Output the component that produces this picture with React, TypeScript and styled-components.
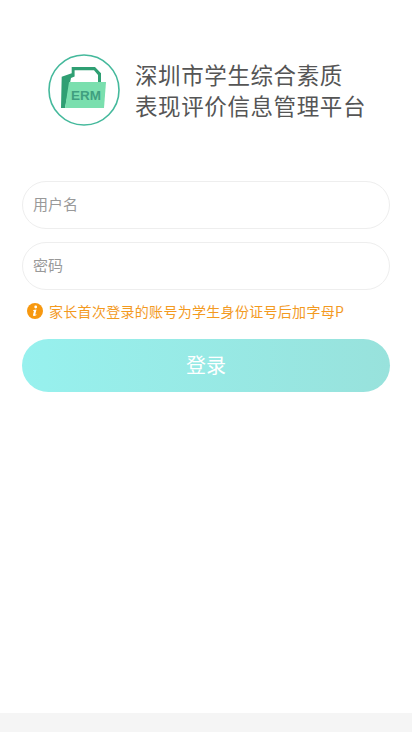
import { useState } from 'react';
import { styled, createGlobalStyle } from 'styled-components';

const FONT = `"Noto Sans CJK SC", "Liberation Sans", sans-serif`;

const GlobalStyle = createGlobalStyle`
  html, body {
    margin: 0;
    padding: 0;
    background: #fff;
  }
  * {
    box-sizing: border-box;
  }
`;

const LogoMark = () => (
  <svg width="74" height="74" viewBox="0 0 74 74">
    <circle cx="37" cy="37" r="35" fill="#fff" stroke="#45b99c" strokeWidth="1.600" />
    <path
      d="M14 55 L14.700 23.700 L24.700 20.300 L24.700 14 L48 14 L54 20.300 L54 29 L51 29 L51 22 L47 17.200 L27.600 17.200 L27.600 23.500 L24 25 L18 55 Z"
      fill="#2f9f73"
    />
    <path d="M22 29 L59 29 L57 55 L18 55 Z" fill="#7adfae" />
    <text x="39" y="47" textAnchor="middle" fontFamily='"Liberation Sans", sans-serif' fontWeight="700" fontSize="13.500" fill="#3f9f80">
      ERM
    </text>
  </svg>
);

const InfoIcon = () => (
  <svg width="16" height="16" viewBox="0 0 16 16">
    <circle cx="8" cy="8" r="8" fill="#f7980f" />
    <circle cx="8.700" cy="4" r="1.400" fill="#fff" />
    <path d="M6.200 7 L9.500 6.600 L8.300 11.300 Q8.200 12 9.400 11.300 L9.500 12 Q7.800 13.300 6.600 13 Q5.800 12.700 6.100 11.600 L7 8 L6.100 7.800 Z" fill="#fff" />
  </svg>
);

const App = () => {
  const [username, setUsername] = useState('');
  const [password, setPassword] = useState('');

  return (
    <Page>
      <GlobalStyle />
      <Main>
        <Brand>
          <LogoMark />
          <BrandName>
            <span>深圳市学生综合素质</span>
            <span>表现评价信息管理平台</span>
          </BrandName>
        </Brand>
        <LoginForm>
          <Field
            type="text"
            placeholder="用户名"
            value={username}
            onChange={(e: React.ChangeEvent<HTMLInputElement>) => setUsername(e.target.value)}
          />
          <Field
            type="password"
            placeholder="密码"
            value={password}
            onChange={(e: React.ChangeEvent<HTMLInputElement>) => setPassword(e.target.value)}
          />
          <Notice>
            <InfoIcon />
            <span>家长首次登录的账号为学生身份证号后加字母P</span>
          </Notice>
          <SubmitButton type="button">登录</SubmitButton>
        </LoginForm>
      </Main>
      <Footer />
    </Page>
  );
};

const Page = styled.div`
  display: flex;
  flex-direction: column;
  min-height: 100vh;
  font-family: ${FONT};
`;

const Main = styled.main`
  flex: 1;
  padding: 53px 22px 0;
`;

const Brand = styled.div`
  display: flex;
  align-items: center;
  gap: 14px;
  padding-left: 25px;
`;

const BrandName = styled.h1`
  display: flex;
  flex-direction: column;
  margin: 0;
  font-size: 22.500px;
  line-height: 31px;
  font-weight: 400;
  letter-spacing: 0.600px;
  color: #555;
  white-space: nowrap;
`;

const LoginForm = styled.form`
  display: flex;
  flex-direction: column;
  margin-top: 54px;
`;

const Field = styled.input`
  width: 100%;
  height: 48px;
  margin-bottom: 13px;
  padding: 0 10px 4px;
  background: #fff;
  border: 1px solid #eeeeee;
  border-radius: 24px;
  font-family: ${FONT};
  font-size: 15px;
  color: #333;
  outline: none;
  &::placeholder {
    color: #999;
    opacity: 1;
  }
`;

const Notice = styled.div`
  display: flex;
  align-items: center;
  gap: 6px;
  height: 18px;
  margin-top: -1px;
  padding-left: 5px;
  font-size: 14px;
  letter-spacing: 0.300px;
  line-height: 16px;
  color: #f39a1f;
  white-space: nowrap;
`;

const SubmitButton = styled.button`
  width: 100%;
  height: 53px;
  margin-top: 19px;
  padding: 0 0 2px;
  border: 0;
  border-radius: 27px;
  background: linear-gradient(90deg, #97f1ee, #98e2dc);
  font-family: ${FONT};
  font-size: 20px;
  color: #fff;
`;

const Footer = styled.footer`
  height: 19px;
  background: #f5f5f5;
`;

export default App;
